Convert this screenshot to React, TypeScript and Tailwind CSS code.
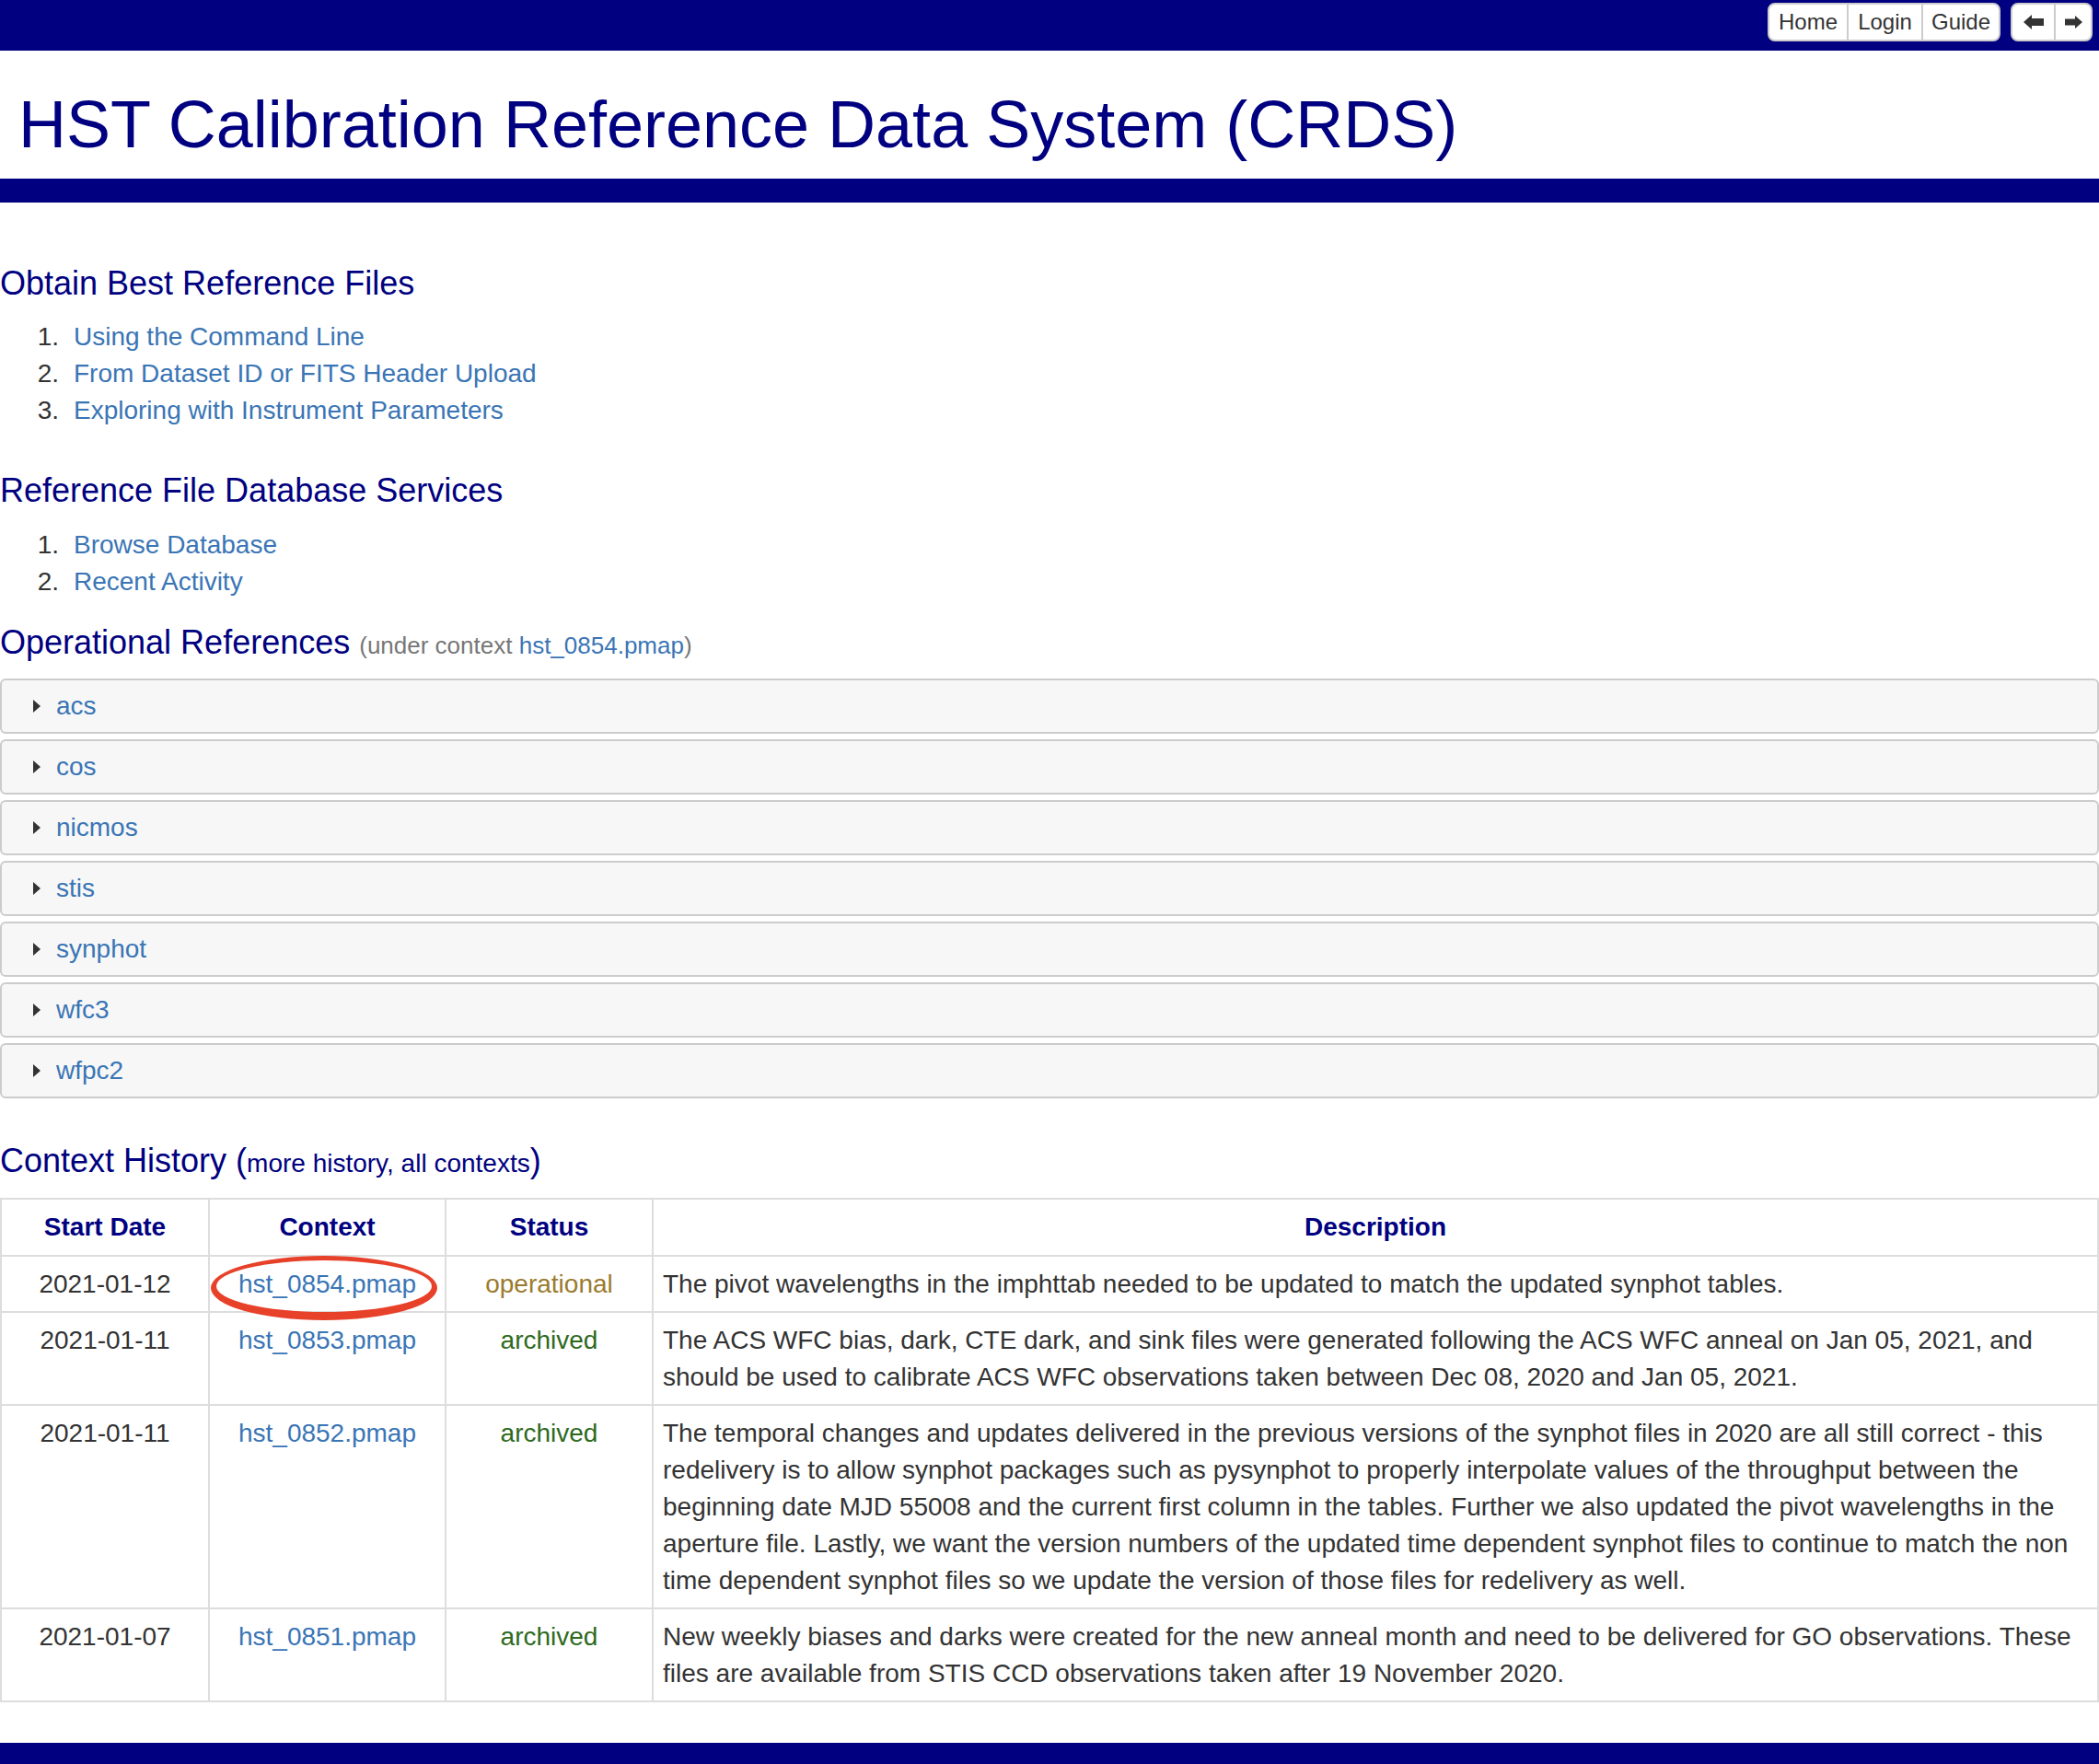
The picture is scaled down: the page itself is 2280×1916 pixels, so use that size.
import React from "react";

const instruments = ["acs", "cos", "nicmos", "stis", "synphot", "wfc3", "wfpc2"];

const history = [
  {
    date: "2021-01-12",
    context: "hst_0854.pmap",
    status: "operational",
    circled: true,
    lines: [
      "The pivot wavelengths in the imphttab needed to be updated to match the updated synphot tables.",
    ],
  },
  {
    date: "2021-01-11",
    context: "hst_0853.pmap",
    status: "archived",
    lines: [
      "The ACS WFC bias, dark, CTE dark, and sink files were generated following the ACS WFC anneal on Jan 05, 2021, and",
      "should be used to calibrate ACS WFC observations taken between Dec 08, 2020 and Jan 05, 2021.",
    ],
  },
  {
    date: "2021-01-11",
    context: "hst_0852.pmap",
    status: "archived",
    lines: [
      "The temporal changes and updates delivered in the previous versions of the synphot files in 2020 are all still correct - this",
      "redelivery is to allow synphot packages such as pysynphot to properly interpolate values of the throughput between the",
      "beginning date MJD 55008 and the current first column in the tables. Further we also updated the pivot wavelengths in the",
      "aperture file. Lastly, we want the version numbers of the updated time dependent synphot files to continue to match the non",
      "time dependent synphot files so we update the version of those files for redelivery as well.",
    ],
  },
  {
    date: "2021-01-07",
    context: "hst_0851.pmap",
    status: "archived",
    lines: [
      "New weekly biases and darks were created for the new anneal month and need to be delivered for GO observations. These",
      "files are available from STIS CCD observations taken after 19 November 2020.",
    ],
  },
];

const LeftArrow = () => (
  <svg width="22" height="16" viewBox="0 0 22 16">
    <polygon points="0,8 9,0 9,4 22,4 22,12 9,12 9,16" fill="#333" />
  </svg>
);

const RightArrow = () => (
  <svg width="19" height="14" viewBox="0 0 19 14">
    <polygon points="19,7 11,0 11,3.5 0,3.5 0,10.5 11,10.5 11,14" fill="#333" />
  </svg>
);

const Caret = () => (
  <svg width="8" height="14" viewBox="0 0 8 14" className="shrink-0">
    <polygon points="0,0 8,7 0,14" fill="#333" />
  </svg>
);

const NumberedList = ({ items }: { items: string[] }) => (
  <ol>
    {items.map((item, i) => (
      <li key={item} className="flex text-[28px] leading-[40px]">
        <span className="w-[64px] text-right text-[#333]">{i + 1}.</span>
        <a href="#" className="pl-[16px] text-[#3a75b5]">
          {item}
        </a>
      </li>
    ))}
  </ol>
);

const App = () => {
  return (
    <div className="min-h-screen w-full bg-white font-['Liberation_Sans',Arial,sans-serif]">
      {/* top bar */}
      <div className="flex h-[55px] items-start justify-end gap-[11px] bg-[#000080] pr-[7px] pt-[3px]">
        <div className="flex h-[42px] overflow-hidden rounded-[8px] border-2 border-[#ccc] bg-white text-[24px] text-[#333]">
          <button className="flex w-[84px] items-center justify-center">Home</button>
          <button className="flex w-[81px] items-center justify-center border-l-2 border-[#ccc]">Login</button>
          <button className="flex w-[84px] items-center justify-center border-l-2 border-[#ccc]">Guide</button>
        </div>
        <div className="flex h-[42px] overflow-hidden rounded-[8px] border-2 border-[#ccc] bg-white">
          <button className="flex w-[45px] items-center justify-center">
            <LeftArrow />
          </button>
          <button className="flex w-[40px] items-center justify-center border-l-2 border-[#ccc]">
            <RightArrow />
          </button>
        </div>
      </div>

      {/* title */}
      <div className="pb-[19px] pl-[20px] pt-[40px]">
        <h1 className="text-[72px] leading-[80px] text-[#000080]">
          HST Calibration Reference Data System (CRDS)
        </h1>
      </div>
      <div className="h-[26px] bg-[#000080]" />

      <h2 className="mt-[68px] text-[36px] leading-[40px] text-[#000080]">Obtain Best Reference Files</h2>
      <div className="mt-[18px]">
        <NumberedList
          items={[
            "Using the Command Line",
            "From Dataset ID or FITS Header Upload",
            "Exploring with Instrument Parameters",
          ]}
        />
      </div>

      <h2 className="mt-[47px] text-[36px] leading-[40px] text-[#000080]">Reference File Database Services</h2>
      <div className="mt-[19px]">
        <NumberedList items={["Browse Database", "Recent Activity"]} />
      </div>

      <h2 className="mt-[26px] text-[36px] leading-[40px] text-[#000080]">
        Operational References{" "}
        <span className="text-[26px] leading-none text-[#777]">
          (under context <a href="#" className="text-[#3a75b5]">hst_0854.pmap</a>)
        </span>
      </h2>

      <div className="mt-[19px] flex flex-col gap-[6px]">
        {instruments.map((name) => (
          <div
            key={name}
            className="flex h-[60px] items-center rounded-[6px] border-2 border-[#ccc] bg-[#f7f7f7] pl-[34px]"
          >
            <Caret />
            <a href="#" className="ml-[17px] text-[28px] text-[#3a75b5]">
              {name}
            </a>
          </div>
        ))}
      </div>

      <h2 className="mt-[48px] text-[36px] leading-[40px] text-[#000080]">
        Context History (
        <span className="text-[28px] leading-none">
          <a href="#">more history</a>, <a href="#">all contexts</a>
        </span>
        )
      </h2>

      <table className="mt-[20px] w-full table-fixed border-collapse text-[28px] leading-[40px] text-[#333]">
        <colgroup>
          <col className="w-[226px]" />
          <col className="w-[257px]" />
          <col className="w-[225px]" />
          <col />
        </colgroup>
        <thead>
          <tr>
            {["Start Date", "Context", "Status", "Description"].map((h) => (
              <th
                key={h}
                className="border-2 border-[#ddd] px-[10px] py-[10px] text-center font-bold text-[#000080]"
              >
                {h}
              </th>
            ))}
          </tr>
        </thead>
        <tbody>
          {history.map((row) => (
            <tr key={row.context}>
              <td className="border-2 border-[#ddd] px-[10px] py-[9.5px] text-center align-top">{row.date}</td>
              <td className="relative border-2 border-[#ddd] px-[10px] py-[9.5px] text-center align-top">
                <a href="#" className="text-[#3a75b5]">
                  {row.context}
                </a>
                {row.circled && (
                  <svg
                    className="pointer-events-none absolute left-[1px] top-[-1px] overflow-visible"
                    width="246"
                    height="70"
                    viewBox="0 0 246 70"
                  >
                    <path
                      fillRule="evenodd"
                      fill="#e8412a"
                      d="M0,35 A123,35 0 1,0 246,35 A123,35 0 1,0 0,35 Z M6,33 A117,28 0 1,1 240,33 A117,28 0 1,1 6,33 Z"
                    />
                  </svg>
                )}
              </td>
              <td
                className={
                  row.status === "operational"
                    ? "border-2 border-[#ddd] px-[10px] py-[9.5px] text-center align-top text-[#9a7b2d]"
                    : "border-2 border-[#ddd] px-[10px] py-[9.5px] text-center align-top text-[#2e6a1e]"
                }
              >
                {row.status}
              </td>
              <td className="border-2 border-[#ddd] px-[10px] py-[9.5px] text-left align-top">
                {row.lines.map((line) => (
                  <span key={line} className="block whitespace-nowrap">
                    {line}
                  </span>
                ))}
              </td>
            </tr>
          ))}
        </tbody>
      </table>

      <div className="mt-[44px] h-[26px] bg-[#000080]" />
    </div>
  );
};

export default App;
